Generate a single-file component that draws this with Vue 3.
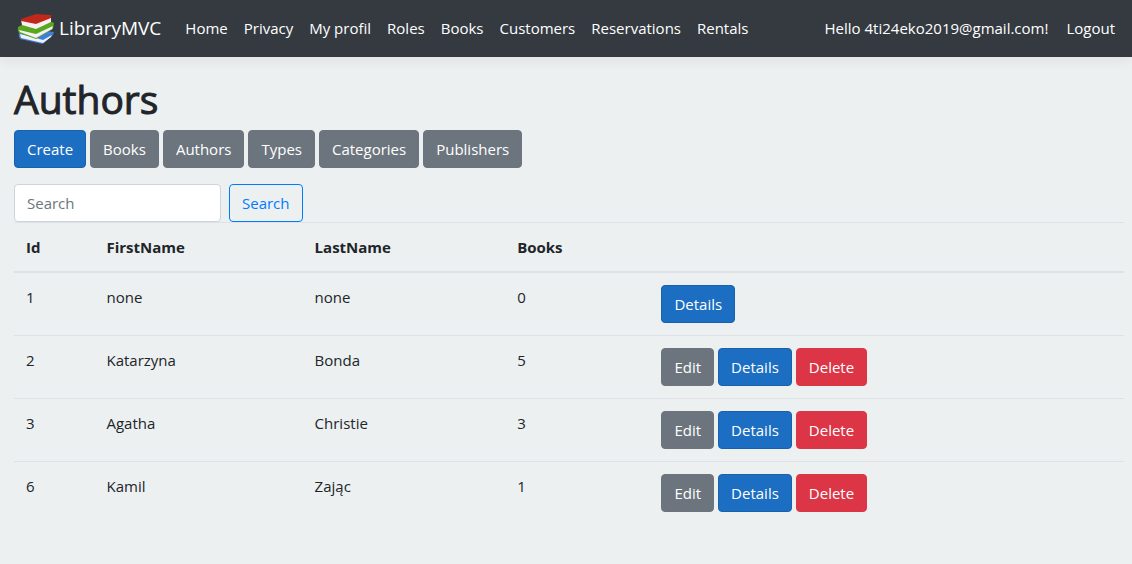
<script setup>
import { ref } from 'vue'

const links = ['Home', 'Privacy', 'My profil', 'Roles', 'Books', 'Customers', 'Reservations', 'Rentals']
const sections = ['Books', 'Authors', 'Types', 'Categories', 'Publishers']
const authors = [
  { id: 1, first: 'none', last: 'none', books: 0, locked: true },
  { id: 2, first: 'Katarzyna', last: 'Bonda', books: 5 },
  { id: 3, first: 'Agatha', last: 'Christie', books: 3 },
  { id: 6, first: 'Kamil', last: 'Zając', books: 1 }
]
const query = ref('')
</script>

<template>
  <header class="navbar">
    <a class="brand" href="#">
      <svg class="logo" viewBox="0 0 40 32" aria-hidden="true">
        <path d="M3 21 L30 19 L38 20 L37 23 L28 31 L26 32 L4 27 Q2 24 3 21 Z" fill="#3f7fd6" />
        <path d="M4 22 L20 26 L27 28 L36 23 L35 25 L27 31 L5 26 Z" fill="#f4effc" />
        <path d="M6 13 L36 10 L38 11 L37 17 L20 27 L3 21 Q1 18 2 15 Z" fill="#58a81e" />
        <path d="M3 18 L20 22 L37 14 L36 17 L20 26 L4 20 Z" fill="#f6effa" />
        <path d="M5 8 L20 11 L35 5 L35 10 L20 17 L6 13 Z" fill="#fbeff4" />
        <path d="M5 7 L20 2 L35 3 L35 6 L20 12 L5 9 Z" fill="#c0281a" />
      </svg>
      <span>LibraryMVC</span>
    </a>
    <nav class="links">
      <a v-for="link in links" :key="link" href="#">{{ link }}</a>
    </nav>
    <div class="account">
      <a class="hello" href="#">Hello 4ti24eko2019@gmail.com!</a>
      <button type="button" class="logout">Logout</button>
    </div>
  </header>

  <main class="page">
    <h1>Authors</h1>
    <div class="actions">
      <a class="btn primary" href="#">Create</a>
      <a v-for="s in sections" :key="s" class="btn secondary" href="#">{{ s }}</a>
    </div>
    <form class="search" @submit.prevent>
      <input v-model="query" type="search" placeholder="Search" aria-label="Search">
      <button type="submit" class="btn outline">Search</button>
    </form>
    <table>
      <colgroup>
        <col class="c-id"><col class="c-first"><col class="c-last"><col class="c-books"><col>
      </colgroup>
      <thead>
        <tr><th>Id</th><th>FirstName</th><th>LastName</th><th>Books</th><th></th></tr>
      </thead>
      <tbody>
        <tr v-for="a in authors" :key="a.id">
          <td>{{ a.id }}</td>
          <td>{{ a.first }}</td>
          <td>{{ a.last }}</td>
          <td>{{ a.books }}</td>
          <td>
            <div class="actions">
              <a v-if="!a.locked" class="btn secondary" href="#">Edit</a>
              <a class="btn primary" href="#">Details</a>
              <a v-if="!a.locked" class="btn danger" href="#">Delete</a>
            </div>
          </td>
        </tr>
      </tbody>
    </table>
  </main>
</template>

<style>
body {
  margin: 0;
  background: #ecf0f1;
  color: #212529;
  font-family: "Segoe UI", "Open Sans", "Noto Sans", sans-serif;
  font-size: 15px;
  line-height: 24px;
}
</style>

<style scoped>
* {
  box-sizing: border-box;
}
a {
  text-decoration: none;
}
.navbar {
  display: flex;
  align-items: center;
  min-height: 57px;
  padding: 0 17px 2px 16px;
  background: #343a40;
  box-shadow: 0 4px 12px rgba(0, 0, 0, 0.06);
}
.navbar a,
.logout {
  color: #fff;
  white-space: nowrap;
}
.brand {
  display: flex;
  align-items: center;
  gap: 3px;
  margin-right: 24px;
  font-size: 19px;
}
.logo {
  width: 40px;
  height: 32px;
}
.links {
  display: flex;
  gap: 16px;
}
.account {
  display: flex;
  gap: 18px;
  margin-left: auto;
}
.logout {
  padding: 0;
  border: 0;
  background: none;
  font: inherit;
}
.page {
  padding: 18px 8px 24px 14px;
}
h1 {
  margin: 0 0 7px;
  font-size: 39px;
  font-weight: 500;
  line-height: 48px;
  -webkit-text-stroke: 1px currentColor;
}
.actions {
  display: flex;
  gap: 4px;
}
.btn {
  padding: 6px 12px;
  border: 1px solid transparent;
  border-radius: 4px;
  color: #fff;
  font: inherit;
}
.primary {
  background: #1b6ec2;
  border-color: #1861ac;
}
.secondary {
  background: #6c757d;
  border-color: #6c757d;
}
.danger {
  background: #dc3545;
  border-color: #dc3545;
}
.outline {
  background: transparent;
  border-color: #007bff;
  color: #007bff;
}
.search {
  display: flex;
  gap: 8px;
  margin-top: 16px;
}
.search input {
  width: 207px;
  height: 38px;
  padding: 6px 12px;
  border: 1px solid #ced4da;
  border-radius: 4px;
  background: #fff;
  color: #495057;
  font: inherit;
  appearance: none;
}
.search input::placeholder {
  color: #6c757d;
}
table {
  width: 100%;
  table-layout: fixed;
  border-collapse: collapse;
}
.c-id {
  width: 7.25%;
}
.c-first {
  width: 18.75%;
}
.c-last {
  width: 18.25%;
}
.c-books {
  width: 13%;
}
th,
td {
  padding: 12px;
  border-top: 1px solid #dee2e6;
  text-align: left;
  vertical-align: top;
}
th {
  border-bottom: 2px solid #dee2e6;
  font-weight: 700;
}
</style>
